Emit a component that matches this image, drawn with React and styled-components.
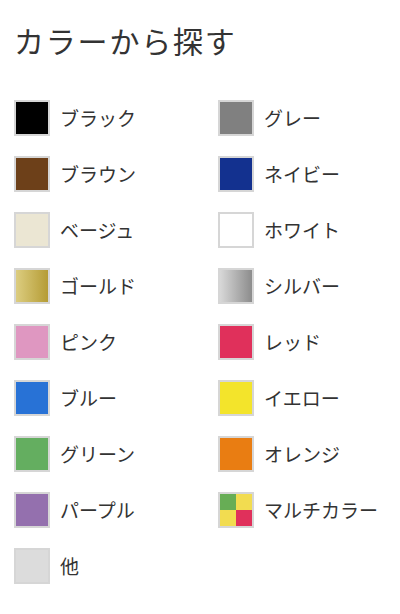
import React from "react";
import styled, { createGlobalStyle } from "styled-components";

const Global = createGlobalStyle`
  html, body { margin: 0; padding: 0; background: #fff; }
  body { font-family: "Noto Sans CJK JP", "Noto Sans", sans-serif; color: #333; }
`;

const Page = styled.div`
  padding: 18px 14px 0 14px;
`;

const Title = styled.h2`
  margin: 0;
  font-size: 30px;
  font-weight: 400;
  line-height: 44px;
  color: #333;
  letter-spacing: 1.8px;
`;

const Grid = styled.ul`
  list-style: none;
  margin: 38px 0 0 0;
  padding: 0;
  display: grid;
  grid-template-columns: 204px 1fr;
  grid-auto-rows: 56px;
`;

const Item = styled.li`
  display: flex;
  align-items: flex-start;
  gap: 10px;
`;

const Swatch = styled.span`
  box-sizing: border-box;
  width: 36px;
  height: 36px;
  flex: none;
  border: 2px solid #d6d6d6;
  background: ${(p) => p.$bg};
  display: grid;
  grid-template-columns: 1fr 1fr;
  grid-template-rows: 1fr 1fr;
`;

const Quad = styled.span`
  background: ${(p) => p.$c};
`;

const Label = styled.span`
  font-size: 19px;
  line-height: 36px;
  color: #333;
`;

const colors = [
  ["ブラック", "#000000"],
  ["グレー", "#808080"],
  ["ブラウン", "#6d4019"],
  ["ネイビー", "#13318f"],
  ["ベージュ", "#ebe6d3"],
  ["ホワイト", "#ffffff"],
  ["ゴールド", "linear-gradient(to right, #dccd80, #b59c35)"],
  ["シルバー", "linear-gradient(to right, #d8d8d8, #8c8c8c)"],
  ["ピンク", "#df97c1"],
  ["レッド", "#e0305b"],
  ["ブルー", "#2872d6"],
  ["イエロー", "#f3e42b"],
  ["グリーン", "#64ae60"],
  ["オレンジ", "#e97d12"],
  ["パープル", "#9470ae"],
  ["マルチカラー", "multi"],
  ["他", "#dcdcdc"],
];

export default function App() {
  return (
    <>
      <Global />
      <Page>
        <Title>カラーから探す</Title>
        <Grid>
          {colors.map(([name, bg]) => (
            <Item key={name}>
              {bg === "multi" ? (
                <Swatch $bg="#fff">
                  <Quad $c="#67ad55" />
                  <Quad $c="#f2dc50" />
                  <Quad $c="#f2dc50" />
                  <Quad $c="#e0305b" />
                </Swatch>
              ) : (
                <Swatch $bg={bg} />
              )}
              <Label>{name}</Label>
            </Item>
          ))}
        </Grid>
      </Page>
    </>
  );
}
